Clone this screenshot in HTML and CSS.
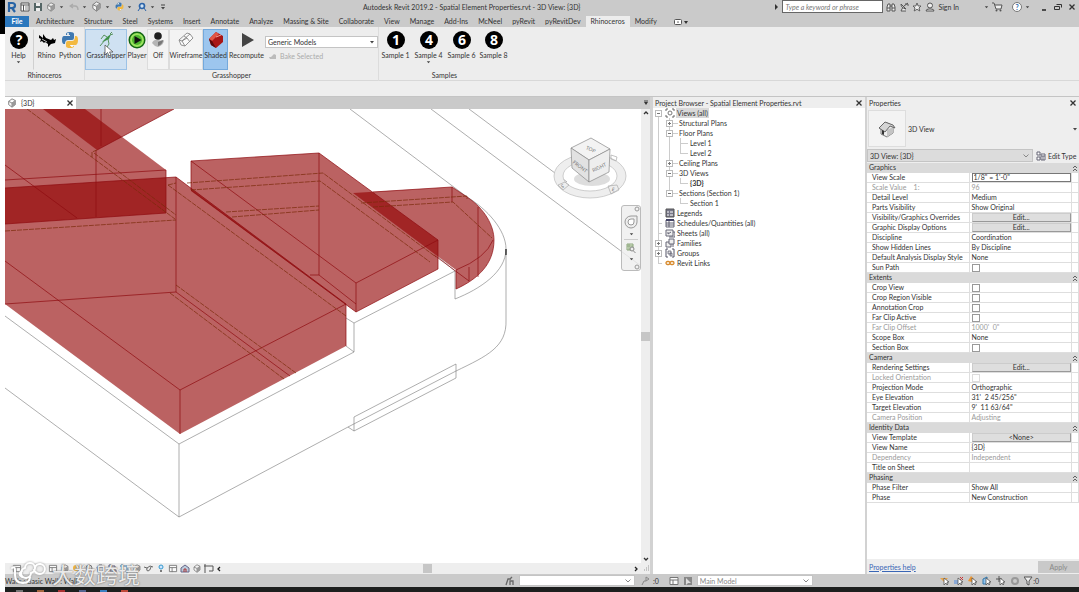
FILE: index.html
```html
<!DOCTYPE html>
<html lang="en">
<head>
  <meta charset="UTF-8" />
  <meta name="viewport" content="width=device-width, initial-scale=1.0"/>
  <title>Autodesk Revit 2019.2 - Spatial Element Properties.rvt - 3D View: {3D}</title>
  <link rel="stylesheet" href="styles.css">
</head>
<body>
  <svg class="defs" aria-hidden="true">
    <symbol id="drop" viewBox="0 0 6 4"><path d="M1 1h4L3 3.500z" fill="#444"/></symbol>
    <symbol id="chev" viewBox="0 0 8 6"><path d="M1.500 1.500L4 4l2.500-2.500" fill="none" stroke="#888"/></symbol>
    <symbol id="close" viewBox="0 0 8 8"><path d="M1.500 1.500l5 5M6.500 1.500l-5 5" stroke="#333" stroke-width="1.300"/></symbol>
    <symbol id="cube" viewBox="0 0 12 12"><path d="M2 4l4-3 4 2v5l-4 3-4-3zM2 4l4 2 4-3M6 6v5" fill="#f4f4f4" stroke="#777"/><path d="M6 6l4-3v5l-4 3z" fill="#999"/></symbol>
    <symbol id="python" viewBox="0 0 18 18"><path d="M5 8V3q0-2 4-2t4 2v4q0 2-2 2H7q-3 0-3 4H3q-2 0-2-4t2-4h6V4H5z" fill="#3f78b0"/><path d="M13 10v5q0 2-4 2t-4-2v-3q0-2 2-2h4q3 0 3-5h1q2 0 2 4t-2 5H9v1h4z" fill="#f3b940"/><circle cx="7" cy="3" r="1" fill="#fff"/><circle cx="11" cy="15" r="1" fill="#fff"/></symbol>
    <symbol id="collapse" viewBox="0 0 6 8"><path d="M1 4l2-2 2 2M1 7l2-2 2 2" fill="none" stroke="#555" stroke-width=".9"/></symbol>
    <symbol id="sheet" viewBox="0 0 10 10"><path d="M1 1.500h8v7H1zM1 4h8M4 4v5" fill="#fafafa" stroke="#777"/></symbol>
    <symbol id="pointer" viewBox="0 0 10 10"><path d="M4 2v7l2-2 1 2 1-1-1-2h2z" fill="#fff" stroke="#555" stroke-width=".8"/></symbol>
  </svg>

  <div class="app">
    <header class="titlebar">
      <div class="quick">
        <button class="ico" aria-label="Revit"><svg width="10" height="12" viewBox="0 0 10 12"><path d="M2 11V2h3q3 0 3 2.500T5 7H3M5 7l3 4" fill="none" stroke="#2763a5" stroke-width="2.200"/></svg></button>
        <button class="ico" aria-label="Open"><svg width="10" height="10" viewBox="0 0 10 10"><path d="M1 1h8v8H1zM1 3h8M3.500 3v6" fill="#fff" stroke="#555"/><path d="M5 5h3M5 7h3" stroke="#888"/></svg></button>
        <button class="ico" aria-label="Save"><svg width="10" height="10" viewBox="0 0 10 10"><path d="M1 1h8v8H1z" fill="#566"/><path d="M3 1h4v3H3zM3 6h4v3H3z" fill="#eee"/></svg></button>
        <button class="ico" aria-label="Synchronize"><svg width="10" height="10"><use href="#cube"/></svg></button>
        <button class="mini" aria-label="Synchronize options"><svg width="5" height="4"><use href="#drop"/></svg></button>
        <button class="ico" aria-label="Undo"><svg width="10" height="8" viewBox="0 0 10 8"><path d="M4 1L1 3l3 2M1 3h5q3 0 3 4" fill="none" stroke="#aaa" stroke-width="1.300"/></svg></button>
        <button class="mini" aria-label="Undo list"><svg width="5" height="4"><use href="#drop"/></svg></button>
        <button class="ico" aria-label="3D view"><svg width="11" height="11"><use href="#cube"/></svg></button>
        <button class="mini" aria-label="3D view options"><svg width="5" height="4"><use href="#drop"/></svg></button>
        <button class="ico" aria-label="Python shell"><svg width="9" height="9"><use href="#python"/></svg></button>
        <button class="mini" aria-label="Python options"><svg width="5" height="4"><use href="#drop"/></svg></button>
        <button class="ico" aria-label="Load add-in"><svg width="10" height="10" viewBox="0 0 10 10"><circle cx="5" cy="4" r="2.500" fill="#cfe2f3" stroke="#2a62a8" stroke-width="1.700"/><path d="M3 6L1 9M7 6l2 3" stroke="#2a62a8"/></svg></button>
        <button class="mini" aria-label="Add-in options"><svg width="5" height="4"><use href="#drop"/></svg></button>
        <button class="mini" aria-label="Customize toolbar"><svg width="6" height="6" viewBox="0 0 6 6"><path d="M1 1h4" stroke="#444"/><path d="M1 3h4L3 5.500z" fill="#444"/></svg></button>
      </div>
      <h1>Autodesk Revit 2019.2 - Spatial Element Properties.rvt - 3D View: {3D}</h1>
      <div class="account">
        <svg width="4" height="6" viewBox="0 0 4 6"><path d="M0 0l3 3-3 3z" fill="#333"/></svg>
        <input class="search" type="text" aria-label="Search" placeholder="Type a keyword or phrase">
        <button class="ico" aria-label="Find"><svg width="10" height="10" viewBox="0 0 10 10"><path d="M1 9V5l1-3h2v7zM9 9V5L8 2H6v7zM4 4h2M1 6h3M6 6h3" fill="#eee" stroke="#555"/></svg></button>
        <button class="ico" aria-label="Communication"><svg width="10" height="10" viewBox="0 0 10 10"><path d="M2 2q0 4 5 5zM4 5L2 9h5M5 4l4-3M6 2h3v2" fill="#eee" stroke="#555"/></svg></button>
        <button class="ico" aria-label="Favorites"><svg width="10" height="10" viewBox="0 0 10 10"><path d="M5 1l1.200 3H9L7 6l.8 3L5 7.300 2.200 9 3 6 1 4h2.800z" fill="#eee" stroke="#555" stroke-width=".9"/></svg></button>
        <button class="sign"><svg width="10" height="10" viewBox="0 0 10 10"><circle cx="5" cy="3.500" r="2.500" fill="#eee" stroke="#555"/><path d="M1 9q0-2 3-2h2q3 0 3 2z" fill="#eee" stroke="#555"/></svg>Sign In</button>
        <button class="mini" aria-label="Account menu"><svg width="5" height="4"><use href="#drop"/></svg></button>
        <button class="ico" aria-label="App store"><svg width="11" height="10" viewBox="0 0 11 10"><path d="M0 1h2l2 6h5l1-4H3" fill="#eee" stroke="#555"/><circle cx="4.500" cy="8.500" r="1" fill="#555"/><circle cx="8.500" cy="8.500" r="1" fill="#555"/></svg></button>
        <button class="help" aria-label="Help">?</button>
        <button class="mini" aria-label="Help menu"><svg width="5" height="4"><use href="#drop"/></svg></button>
        <div class="window">
          <button aria-label="Minimize"><svg width="8" height="8" viewBox="0 0 8 8"><path d="M2 7h4" stroke="#222" stroke-width="1.500"/></svg></button>
          <button aria-label="Restore"><svg width="8" height="8" viewBox="0 0 8 8"><path d="M2.500 1.500h5v3M.5 3.500h5v3h-5z" fill="none" stroke="#333"/></svg></button>
          <button aria-label="Close"><svg width="8" height="8"><use href="#close"/></svg></button>
        </div>
      </div>
    </header>

    <nav class="tabs">
      <a class="file" href="#file">File</a>
      <a href="#architecture">Architecture</a>
      <a href="#structure">Structure</a>
      <a href="#steel">Steel</a>
      <a href="#systems">Systems</a>
      <a href="#insert">Insert</a>
      <a href="#annotate">Annotate</a>
      <a href="#analyze">Analyze</a>
      <a href="#massing">Massing &amp; Site</a>
      <a href="#collaborate">Collaborate</a>
      <a href="#view">View</a>
      <a href="#manage">Manage</a>
      <a href="#addins">Add-Ins</a>
      <a href="#mcneel">McNeel</a>
      <a href="#pyrevit">pyRevit</a>
      <a href="#pyrevitdev">pyRevitDev</a>
      <a class="current" href="#rhinoceros">Rhinoceros</a>
      <a href="#modify">Modify</a>
      <button class="panelmode" aria-label="Minimize ribbon"><svg width="14" height="6" viewBox="0 0 14 6"><rect x=".5" y=".5" width="7" height="5" rx="1" fill="#fff" stroke="#555"/><path d="M3 3.500h2L4 2zM10 2h4l-2 3z" fill="#333"/></svg></button>
    </nav>

    <section class="ribbon">
      <div class="panel rhino-panel">
        <div class="tools">
          <button class="tool w-help"><svg viewBox="0 0 18 18"><circle cx="9" cy="9" r="9"/><text x="9" y="14" class="glyph">?</text></svg>Help<svg class="more"><use href="#drop"/></svg></button>
          <button class="tool w-rhino"><svg viewBox="0 0 18 18"><path d="M1 4l4 3V3l3 4 5 2 2-2 1 2 2-1-1 4-4 1-3 3v-3l-3-2-1 1-2-2-2 1 1-3-2-1z"/><path d="M4 8l5 3" stroke="#eee" stroke-width=".8"/></svg>Rhino</button>
          <button class="tool w-python"><svg viewBox="0 0 18 18"><use href="#python"/></svg>Python</button>
        </div>
        <h2>Rhinoceros</h2>
      </div>
      <div class="panel gh-panel">
        <div class="tools">
          <button class="tool w-gh hover"><svg viewBox="0 0 18 18"><path d="M14 3l-4 3-5 5 3-1 4-2z" fill="#3d9146"/><path d="M13 3l2-2M13 4l3-1M10 6L7 4 4 8M8 9L3 15M11 8l1 5-2 3" stroke="#4b8a4d" stroke-width=".9" fill="none"/></svg>Grasshopper</button>
          <button class="tool w-player"><svg viewBox="0 0 18 18"><circle cx="9" cy="9" r="8.500" fill="#161"/><circle cx="9" cy="9" r="7" fill="#9be45f"/><circle cx="9" cy="9" r="5" fill="#4eb62f"/><path d="M6.500 5l7 4-7 4z" fill="#111"/></svg>Player</button>
          <button class="tool w-off box"><svg viewBox="0 0 18 18"><circle cx="9" cy="5" r="3.800" fill="#222"/><path d="M3 12q2-4 6-3t6 0q0 5-6 7-4-1-6-4z" fill="#b5b5b5"/><path d="M9 11l5-2q0 4-5 6z" fill="#777"/></svg>Off</button>
          <button class="tool w-wire box"><svg viewBox="0 0 18 18"><path d="M2 9l8-7 3 1 3 4-8 8-4-1zM2 9l3 1 8-7M5 10l3 5M7 5l3 2 3 4M5 10l5-3" fill="#fafafa" stroke="#888" stroke-width=".9"/></svg>Wireframe</button>
          <button class="tool w-shade on"><svg viewBox="0 0 18 18"><path d="M2 8l7-7 7 4v6l-7 6-5-3z" fill="#a91616"/><path d="M2 8l7-7 3 2-7 7z" fill="#e15545"/><path d="M2 8l3 2 4 7-5-3z" fill="#5e0909"/><path d="M9 6l5-2" stroke="#f3a39a"/></svg>Shaded</button>
          <button class="tool w-recomp"><svg viewBox="0 0 18 18"><path d="M4 2l12 7-12 7z" fill="#444"/></svg>Recompute</button>
          <div class="bake">
            <span class="combo category"><select aria-label="Bake category"><option>Generic Models</option></select><svg width="6" height="4"><use href="#drop"/></svg></span>
            <button class="bakebtn" disabled><svg width="8" height="8" viewBox="0 0 8 8"><path d="M0 5h2l3-3 2 1v4H1z" fill="#bbb"/></svg>Bake Selected</button>
          </div>
        </div>
        <h2>Grasshopper</h2>
      </div>
      <div class="panel samples">
        <div class="tools">
          <button class="tool w-sample"><svg viewBox="0 0 18 18"><circle cx="9" cy="9" r="9"/><text x="9" y="14" class="glyph">1</text></svg>Sample 1</button>
          <button class="tool w-sample"><svg viewBox="0 0 18 18"><circle cx="9" cy="9" r="9"/><text x="9" y="14" class="glyph">4</text></svg>Sample 4<svg class="more"><use href="#drop"/></svg></button>
          <button class="tool w-sample"><svg viewBox="0 0 18 18"><circle cx="9" cy="9" r="9"/><text x="9" y="14" class="glyph">6</text></svg>Sample 6</button>
          <button class="tool w-last"><svg viewBox="0 0 18 18"><circle cx="9" cy="9" r="9"/><text x="9" y="14" class="glyph">8</text></svg>Sample 8</button>
        </div>
        <h2>Samples</h2>
      </div>
      <svg class="cursor" width="10" height="13" viewBox="0 0 10 13"><path d="M1 1v10l2.500-2.500L5 12l2-1-1.500-3H9z" fill="#fff" stroke="#555" stroke-width=".8"/></svg>
    </section>

    <main class="workspace">
      <section class="viewer">
        <div class="doctabs">
          <div class="doctab"><svg width="10" height="10"><use href="#cube"/></svg><span>{3D}</span><button aria-label="Close view"><svg width="8" height="8"><use href="#close"/></svg></button></div>
          <button class="tablist" aria-label="View list"><svg width="6" height="6" viewBox="0 0 6 6"><path d="M1 1h4" stroke="#444"/><path d="M1 2h4L3 5z" fill="#333"/></svg></button>
        </div>
        <div class="stage">
          <div class="canvas">
            <svg class="model" viewBox="5 109 636 454" preserveAspectRatio="xMinYMin slice" role="img" aria-label="3D model">
              <!-- building shell -->
              <g class="shell">
                <path d="M350 109L467 197M431 109L641 266M469 109L567 182"/>
                <path d="M5 316L179 444L354 352V323L455 271V299C480 289 506 272 506 249C506 230 487 209 467 197"/>
                <path d="M346 346l8 6M346 318l8 5M438 257l17 14"/>
                <path d="M179 444V517M5 388L179 517L348 427L456 371C487 356 507 347 506 320V249"/>
                <path d="M354 417L456 364V378L354 431zM348 427l6 4"/>
              </g>
              <!-- spaces -->
              <g class="solid">
                <path d="M5 109H85L166 170V213L5 224z"/>
                <path d="M43 109H174L97 150z"/>
                <path d="M5 188L176 177L346 304V346L180 434L5 304z"/>
                <path d="M191 161L319 153L438 240V269L356 312L191 191z"/>
                <path d="M353 193L452 187L467 197C485 209 494 226 494 240C494 264 478 279 456 289V270z"/>
              </g>
              <g class="edge">
                <path d="M5 180L166 170V213L5 224M5 165L77 218M96 150V217M101 109V146M97 150L174 109"/>
                <path d="M5 188L176 177V292L5 304M5 261L180 390V434M180 390L346 304V346M176 292L290 376"/>
                <path d="M176 177L346 304M191 190V161L319 153V275H310M319 153L438 240V269L356 312V283L191 161M356 283L438 240M319 275L356 304M191 190L356 312"/>
                <path d="M373 192L452 187V202M478 207V277M469 267V281M456 270V289M434 255L469 281M452 187L467 197C485 209 494 226 494 240C494 264 478 279 456 289M456 270Q486 258 493 240"/>
              </g>
              <g class="hidden-edge">
                <path d="M27 109L175 219M92 157V152L97 150M94 153L176 215M5 231L176 220"/>
                <path d="M168 185L346 316M170 293L284 379M176 285L296 373M168 185L176 183"/>
                <path d="M187 183L323 173L436 257M191 190L320 181L430 262M226 212L319 206M232 217L319 210"/>
                <path d="M361 203L467 196V199M373 207L453 202L492 238"/>
              </g>
              <path d="M506 249v6" stroke="#000"/>
            </svg>
            <svg class="viewcube" width="74" height="66" viewBox="553 135 74 66" role="img" aria-label="View cube">
              <path class="ring" fill-rule="evenodd" d="M554 176a36 22 0 1 0 72 0a36 22 0 1 0-72 0zM563 176a27 15 0 1 0 54 0a27 15 0 1 0-54 0z"/>
              <ellipse cx="592" cy="179" rx="18" ry="7" fill="#bbb" opacity=".5"/>
              <path d="M591 138l19 11-21 11-18-12z" fill="#f3f3f3" stroke="#888" stroke-width=".7"/>
              <path d="M571 148l18 12v22l-17-14z" fill="#e2e2e2" stroke="#888" stroke-width=".7"/>
              <path d="M589 160l21-11-1 23-20 10z" fill="#eee" stroke="#888" stroke-width=".7"/>
              <g class="facetext">
                <text transform="translate(590 151) rotate(25)">TOP</text>
                <text transform="translate(579 168) rotate(36)">FRONT</text>
                <text transform="translate(600 169) rotate(-26)">RIGHT</text>
                <text transform="translate(563 188) rotate(-20)">S</text>
                <text transform="translate(613 191) rotate(15)">E</text>
              </g>
              <path d="M558 185l7-3 4 3-6 5zM608 186l9-1 2 5-8 4zM611 155l6 2-1 4-5-2z" fill="none" stroke="#aaa" stroke-width=".7"/>
            </svg>
            <div class="navbar">
              <button aria-label="Close navigation bar"><svg width="6" height="6" viewBox="0 0 6 6"><circle cx="3" cy="3" r="2" fill="none" stroke="#999"/></svg></button>
              <button aria-label="Steering wheel"><svg width="14" height="14" viewBox="0 0 14 14"><path d="M13 1v6a6 6 0 1 1-6-6z" fill="#eee" stroke="#999"/><path d="M10 4v3a3 3 0 1 1-3-3z" fill="#fff" stroke="#999"/></svg></button>
              <button aria-label="Wheel options"><svg width="5" height="4"><use href="#drop"/></svg></button>
              <button class="zoombtn" aria-label="Zoom region"><svg width="10" height="11" viewBox="0 0 10 11"><path d="M1 1h6v6H1zM1 3h6M3 1v6" fill="#dce9d0" stroke="#8ca67d"/><circle cx="6" cy="6" r="2" fill="#eee" stroke="#888"/><path d="M7.500 8L9.500 10" stroke="#888"/></svg></button>
              <button aria-label="Zoom options"><svg width="5" height="4"><use href="#drop"/></svg></button>
              <button aria-label="Customize"><svg width="6" height="6" viewBox="0 0 6 6"><circle cx="3" cy="3" r="2" fill="none" stroke="#999"/></svg></button>
            </div>
          </div>
          <div class="vscroll">
            <svg width="8" height="8" viewBox="0 0 8 8"><path d="M2 5l2-2 2 2" fill="none" stroke="#333" stroke-width="1.300"/></svg>
            <span class="thumb"></span>
            <svg width="8" height="8" viewBox="0 0 8 8"><path d="M2 3l2 2 2-2" fill="none" stroke="#333" stroke-width="1.300"/></svg>
          </div>
        </div>
        <div class="viewbar">
          <div class="viewtools">
            <button class="scalebtn" aria-label="Scale"><svg width="10" height="9"><use href="#sheet"/></svg></button>
            <button aria-label="Detail level"><svg width="10" height="9"><use href="#sheet"/></svg></button>
            <button aria-label="Visual style"><svg width="10" height="9"><use href="#cube"/></svg></button>
            <button aria-label="Sun path"><svg width="10" height="9" viewBox="0 0 10 9"><circle cx="4" cy="4" r="3" fill="#f1b53d"/><path d="M5 5l4 3" stroke="#c22"/></svg></button>
            <button aria-label="Shadows"><svg width="10" height="9" viewBox="0 0 10 9"><circle cx="5" cy="4" r="3" fill="#ddd" stroke="#777"/><path d="M6 6l3 2" stroke="#c22" stroke-width="1.500"/></svg></button>
            <button aria-label="Rendering dialog"><svg width="10" height="9" viewBox="0 0 10 9"><path d="M1 3h7l-1 5H2zM3 3V1h3" fill="#ddd" stroke="#667"/></svg></button>
            <button aria-label="Crop view"><svg width="10" height="9" viewBox="0 0 10 9"><path d="M2 0v7h7M0 2h7v7" fill="none" stroke="#557"/></svg></button>
            <button aria-label="Show crop"><svg width="10" height="9" viewBox="0 0 10 9"><path d="M2 0v7h7M0 2h7v7" fill="none" stroke="#37a"/></svg></button>
            <button aria-label="Lock view"><svg width="10" height="9"><use href="#cube"/></svg></button>
            <button aria-label="Hide or isolate"><svg width="10" height="9" viewBox="0 0 10 9"><path d="M0 3l3 1 3-2 3 1M3 4q-1 3 1 3t3-4" fill="none" stroke="#666"/></svg></button>
            <button aria-label="Reveal hidden elements"><svg width="10" height="9" viewBox="0 0 10 9"><circle cx="5" cy="3" r="2" fill="#cde4ff" stroke="#39c"/><path d="M4 7h2" stroke="#555" stroke-width="1.500"/></svg></button>
            <button aria-label="View properties"><svg width="10" height="9"><use href="#sheet"/></svg></button>
            <button aria-label="Analytical model"><svg width="10" height="9" viewBox="0 0 10 9"><path d="M1 4l4-3 4 3v4H1z" fill="#bcd" stroke="#668"/><path d="M4 8V5h2v3" stroke="#a33" fill="none"/></svg></button>
            <button aria-label="Displacement sets"><svg width="10" height="9"><use href="#cube"/></svg></button>
            <button aria-label="Constraints"><svg width="10" height="9" viewBox="0 0 10 9"><path d="M1 0v9M0 2h9v5M5 7h4" fill="none" stroke="#555"/></svg></button>
            <button aria-label="Scroll left"><svg width="6" height="8" viewBox="0 0 6 8"><path d="M4 2L2 4l2 2" fill="none" stroke="#222" stroke-width="1.300"/></svg></button>
          </div>
          <div class="hscroll"><span class="thumb"></span></div>
          <svg width="8" height="8" viewBox="0 0 8 8"><path d="M3 2l2 2-2 2" fill="none" stroke="#222" stroke-width="1.300"/></svg>
          <svg class="grip" width="7" height="7" viewBox="0 0 7 7"><path d="M5 1h1M3 3h1M5 3h1M1 5h1M3 5h1M5 5h1" stroke="#999"/></svg>
        </div>
      </section>

      <aside class="browser">
        <header class="dockhead"><h2>Project Browser - Spatial Element Properties.rvt</h2><button aria-label="Close project browser"><svg width="8" height="8"><use href="#close"/></svg></button></header>
        <ul class="tree">
          <li>
            <div class="row"><i class="toggle minus"></i><svg class="kind" viewBox="0 0 10 10"><path d="M1 3V1h2M7 1h2v2M9 7v2H7M3 9H1V7" fill="none" stroke="#666"/><circle cx="5" cy="5" r="2" fill="none" stroke="#777"/></svg><span class="picked">Views (all)</span></div>
            <ul class="sub">
              <li><div class="row"><i class="toggle plus"></i><i class="dash"></i>Structural Plans</div></li>
              <li><div class="row"><i class="toggle minus"></i><i class="dash"></i>Floor Plans</div>
                <ul class="leafs"><li class="row">Level 1</li><li class="row">Level 2</li></ul></li>
              <li><div class="row"><i class="toggle plus"></i><i class="dash"></i>Ceiling Plans</div></li>
              <li><div class="row"><i class="toggle minus"></i><i class="dash"></i>3D Views</div>
                <ul class="leafs"><li class="row open">{3D}</li></ul></li>
              <li><div class="row"><i class="toggle minus"></i><i class="dash"></i>Sections (Section 1)</div>
                <ul class="leafs"><li class="row">Section 1</li></ul></li>
            </ul>
          </li>
          <li><div class="row"><i class="stub"></i><svg class="kind" viewBox="0 0 10 10"><path d="M1 1h8v8H1z" fill="#778" stroke="#555"/><path d="M2 4h2M2 7h2M5 4h3M5 7h3" stroke="#fff"/></svg><span>Legends</span></div></li>
          <li><div class="row"><i class="stub"></i><svg class="kind" viewBox="0 0 10 10"><path d="M1 2h8v7H1zM1 5h8M1 7h8M4 3v6" fill="#fff" stroke="#556" stroke-width=".9"/><path d="M1 2h8" stroke="#446" stroke-width="2"/></svg><span>Schedules/Quantities (all)</span></div></li>
          <li><div class="row"><i class="stub"></i><svg class="kind" viewBox="0 0 10 10"><path d="M1 2h7v6H1zM8 4h2v5H4" fill="#eee" stroke="#667"/><path d="M3 6l3-2M3 4v2" stroke="#667"/></svg><span>Sheets (all)</span></div></li>
          <li><div class="row"><i class="toggle plus"></i><svg class="kind" viewBox="0 0 10 10"><path d="M1 9V4h3V1h5v5H6v3z" fill="#eee" stroke="#667"/><path d="M4 4v2h2M8 6v3" stroke="#667" fill="none"/></svg><span>Families</span></div></li>
          <li><div class="row"><i class="toggle plus"></i><svg class="kind" viewBox="0 0 10 10"><path d="M3 1H1v8h2M7 1h2v8H7" fill="none" stroke="#556"/><path d="M3 3h3v3H3zM5 5h2v3H5z" fill="#ddd" stroke="#667" stroke-width=".8"/></svg><span>Groups</span></div></li>
          <li><div class="row"><i class="stub"></i><svg class="kind" viewBox="0 0 10 10"><rect x="1" y="3.500" width="4" height="3" rx="1.500" fill="none" stroke="#d78a2d" stroke-width="1.300"/><rect x="5" y="3.500" width="4" height="3" rx="1.500" fill="none" stroke="#d78a2d" stroke-width="1.300"/></svg><span>Revit Links</span></div></li>
        </ul>
      </aside>

      <aside class="props">
        <header class="dockhead"><h2>Properties</h2><button aria-label="Close properties"><svg width="8" height="8"><use href="#close"/></svg></button></header>
        <div class="type">
          <div class="preview"><svg width="18" height="18" viewBox="0 0 18 18"><path d="M3 8v6l6 3 6-4V6L9 3z" fill="#eee" stroke="#777"/><path d="M9 10v7l6-4V7z" fill="#c4c4c4"/><path d="M1 8l6-6 8 3 2 3-5-2-5 6z" fill="#d5d5d5" stroke="#666"/><path d="M4 10l2 1v4l-2-1z" fill="#333"/></svg></div>
          <span>3D View</span>
          <button aria-label="Type list"><svg width="6" height="4"><use href="#drop"/></svg></button>
        </div>
        <div class="instance">
          <span class="combo"><select aria-label="Instance"><option>3D View: {3D}</option></select><svg width="8" height="6"><use href="#chev"/></svg></span>
          <button><svg width="10" height="10" viewBox="0 0 10 10"><path d="M1 1h3v3H1zM1 6h3v3H1zM5 3h4v6H5zM5 5h4M7 5v4" fill="#fff" stroke="#667"/></svg>Edit Type</button>
        </div>
        <div class="gridwrap">
          <table>
            <tbody>
              <tr class="group"><th colspan="2">Graphics</th><td><svg><use href="#collapse"/></svg></td></tr>
              <tr><th><label for="scale">View Scale</label></th><td><input id="scale" type="text" value="1/8&quot; = 1'-0&quot;"></td><td></td></tr>
              <tr class="off"><th>Scale Value &nbsp;&nbsp; 1:</th><td>96</td><td></td></tr>
              <tr><th>Detail Level</th><td>Medium</td><td></td></tr>
              <tr><th>Parts Visibility</th><td>Show Original</td><td></td></tr>
              <tr><th>Visibility/Graphics Overrides</th><td><button>Edit...</button></td><td></td></tr>
              <tr><th>Graphic Display Options</th><td><button>Edit...</button></td><td></td></tr>
              <tr><th>Discipline</th><td>Coordination</td><td></td></tr>
              <tr><th>Show Hidden Lines</th><td>By Discipline</td><td></td></tr>
              <tr><th>Default Analysis Display Style</th><td>None</td><td></td></tr>
              <tr><th><label for="sun">Sun Path</label></th><td><input id="sun" type="checkbox"></td><td></td></tr>
            </tbody>
            <tbody>
              <tr class="group"><th colspan="2">Extents</th><td><svg><use href="#collapse"/></svg></td></tr>
              <tr><th><label for="crop">Crop View</label></th><td><input id="crop" type="checkbox"></td><td></td></tr>
              <tr><th><label for="region">Crop Region Visible</label></th><td><input id="region" type="checkbox"></td><td></td></tr>
              <tr><th><label for="anno">Annotation Crop</label></th><td><input id="anno" type="checkbox"></td><td></td></tr>
              <tr><th><label for="far">Far Clip Active</label></th><td><input id="far" type="checkbox"></td><td></td></tr>
              <tr class="off"><th>Far Clip Offset</th><td>1000'&nbsp; 0"</td><td></td></tr>
              <tr><th>Scope Box</th><td>None</td><td></td></tr>
              <tr><th><label for="section">Section Box</label></th><td><input id="section" type="checkbox"></td><td></td></tr>
            </tbody>
            <tbody>
              <tr class="group"><th colspan="2">Camera</th><td><svg><use href="#collapse"/></svg></td></tr>
              <tr><th>Rendering Settings</th><td><button>Edit...</button></td><td></td></tr>
              <tr class="off"><th><label for="locked">Locked Orientation</label></th><td><input id="locked" type="checkbox" disabled></td><td></td></tr>
              <tr><th>Projection Mode</th><td>Orthographic</td><td></td></tr>
              <tr><th>Eye Elevation</th><td>31'&nbsp; 2 45/256"</td><td></td></tr>
              <tr><th>Target Elevation</th><td>9'&nbsp; 11 63/64"</td><td></td></tr>
              <tr class="off"><th>Camera Position</th><td>Adjusting</td><td></td></tr>
            </tbody>
            <tbody>
              <tr class="group"><th colspan="2">Identity Data</th><td><svg><use href="#collapse"/></svg></td></tr>
              <tr><th>View Template</th><td><button>&lt;None&gt;</button></td><td></td></tr>
              <tr><th>View Name</th><td>{3D}</td><td></td></tr>
              <tr class="off"><th>Dependency</th><td>Independent</td><td></td></tr>
              <tr><th>Title on Sheet</th><td></td><td></td></tr>
            </tbody>
            <tbody>
              <tr class="group"><th colspan="2">Phasing</th><td><svg><use href="#collapse"/></svg></td></tr>
              <tr><th>Phase Filter</th><td>Show All</td><td></td></tr>
              <tr><th>Phase</th><td>New Construction</td><td></td></tr>
            </tbody>
          </table>
        </div>
        <footer class="apply"><a href="#help">Properties help</a><button disabled>Apply</button></footer>
      </aside>
    </main>

    <footer class="status">
      <span class="message">Walls : Basic Wall : Wall</span>
      <svg width="10" height="10" viewBox="0 0 10 10"><path d="M1 9l2-6h3M5 9V5h3v4M7 1L5 3" fill="none" stroke="#666" stroke-width="1.300"/></svg>
      <span class="combo workset"><select aria-label="Active workset"><option></option></select><svg width="8" height="6"><use href="#chev"/></svg></span>
      <span class="requests"><svg width="9" height="10" viewBox="0 0 9 10"><path d="M1 9l2-4h2V1l3 2-3 2" fill="none" stroke="#888"/></svg>:0</span>
      <svg width="10" height="10"><use href="#sheet"/></svg>
      <svg width="10" height="10" viewBox="0 0 10 10"><path d="M1 1h8v8H1z" fill="#888"/><path d="M3 2l5 5H5L3 9z" fill="#ddd"/></svg>
      <span class="combo option"><select aria-label="Design option"><option>Main Model</option></select><svg width="8" height="6"><use href="#chev"/></svg></span>
      <div class="selectors">
        <button aria-label="Select links"><svg width="10" height="10" viewBox="0 0 10 10"><path d="M0 2h8L4 6z" fill="#e8a44a"/><use href="#pointer"/></svg></button>
        <button aria-label="Select underlay"><svg width="10" height="10" viewBox="0 0 10 10"><path d="M0 4h7v4H0z" fill="#8aa9d6"/><path d="M6 1l3 3M9 1L6 4" stroke="#c33"/><use href="#pointer"/></svg></button>
        <button aria-label="Select pinned"><svg width="10" height="10" viewBox="0 0 10 10"><path d="M3 0l3 3-2 3-4-1z" fill="#e99430"/><use href="#pointer"/></svg></button>
        <button aria-label="Select by face"><svg width="10" height="10" viewBox="0 0 10 10"><path d="M1 3l4-2v7H1z" fill="#8fc4ef" stroke="#37a"/><use href="#pointer"/></svg></button>
        <button aria-label="Drag on selection"><svg width="10" height="10" viewBox="0 0 10 10"><path d="M3 0v6M0 3h6" stroke="#555"/><use href="#pointer"/></svg></button>
        <button aria-label="Background processes"><svg width="10" height="10" viewBox="0 0 10 10"><circle cx="5" cy="5" r="3" fill="none" stroke="#999" stroke-width="2"/></svg></button>
        <button aria-label="Filter"><svg width="9" height="10" viewBox="0 0 9 10"><path d="M0 1h8L5 5v4L3 8V5z" fill="#eee" stroke="#555"/></svg>:0</button>
      </div>
    </footer>
    <div class="taskbar"><i class="c1"></i><i class="c2"></i><i class="c3"></i><i class="c4"></i><i class="c5"></i><i class="c6"></i></div>

    <div class="watermark">
      <svg width="42" height="30" viewBox="0 0 42 30"><path d="M4 10q3-2 3 2v5q0 8 8 8 7 0 7-6M14 13q-5 3 0 6M17 10a5 5 0 1 1 6 5a5 5 0 1 1-6-5M27 10a5 5 0 1 1 5 6q-4 0-6-4" /></svg>
      <span lang="zh">大数跨境</span>
    </div>
  </div>
</body>
</html>
```
FILE: styles.css
```css
* {
  box-sizing: border-box;
}
body {
  margin: 0;
  background: linear-gradient(#000 34px, #fff 34px);
  font-family: Lato, "Open Sans", "Noto Sans CJK SC", sans-serif;
  font-size: 7px;
  line-height: 10px;
  color: #333;
}
h1, h2 {
  margin: 0;
  font-size: 7px;
  font-weight: normal;
}
a {
  color: inherit;
  text-decoration: none;
}
button, input, select {
  margin: 0;
  padding: 0;
  border: 0;
  background: none;
  color: inherit;
  font: inherit;
}
svg {
  display: block;
  flex: none;
}
.defs {
  position: absolute;
  width: 0;
  height: 0;
}
.app {
  position: relative;
  display: flex;
  flex-direction: column;
  height: 100vh;
  margin-left: 5px;
  background: #cacaca;
}

/* title bar */
.titlebar {
  display: flex;
  align-items: center;
  height: 13px;
}
.titlebar h1 {
  flex: 1;
  text-align: center;
  white-space: nowrap;
}
.quick, .account, .window {
  display: flex;
  align-items: center;
}
.quick {
  width: 163px;
  padding-left: 2px;
  justify-content: space-between;
}
.quick .mini {
  margin-right: 2px;
}
.account {
  gap: 3px;
}
.search {
  width: 101px;
  height: 13px;
  padding: 0 2px;
  border: 1px solid #666;
  background: #fff;
  font-style: italic;
}
.search::placeholder {
  color: #777;
}
.sign {
  display: flex;
  align-items: center;
  gap: 3px;
  margin-right: 22px;
}
.help {
  width: 10px;
  height: 10px;
  margin-left: 6px;
  border: 1px solid #777;
  border-radius: 50%;
  background: #fff;
  color: #2a62a8;
  font-weight: bold;
  line-height: 8px;
}
.window {
  gap: 6px;
  margin-left: 7px;
  padding-right: 3px;
}

/* ribbon tabs */
.tabs {
  display: flex;
  height: 14px;
  padding-top: 3px;
  line-height: 11px;
  white-space: nowrap;
}
.tabs a {
  padding: 0 5px;
}
.tabs .file {
  width: 24px;
  margin-right: 2px;
  background: #2a77bd;
  color: #fff;
  font-weight: bold;
  text-align: center;
}
.tabs .current {
  background: #ededed;
}
.panelmode {
  margin-left: 12px;
}

/* ribbon panels */
.ribbon {
  position: relative;
  display: flex;
  height: 69px;
  padding-bottom: 15px;
  background: linear-gradient(#ededed 53px, #d8d8d8 53px, #d8d8d8 54px, #eee 54px);
}
.panel {
  border-right: 1px solid #dcdcdc;
}
.panel h2 {
  text-align: center;
}
.rhino-panel {
  width: 80px;
}
.gh-panel {
  width: 294px;
}
.samples {
  width: 131px;
  border-right: 0;
}
.tools {
  display: flex;
  height: 43px;
  padding: 2px 0 0;
}
.tool {
  display: flex;
  flex-direction: column;
  align-items: center;
  height: 41px;
  padding-top: 1px;
  border: 1px solid transparent;
  white-space: nowrap;
}
.tool > svg {
  width: 18px;
  height: 18px;
  margin-bottom: 1px;
  overflow: visible;
}
.tool > .more {
  width: 5px;
  height: 4px;
}
.glyph {
  fill: #fff;
  font-family: "Open Sans", sans-serif;
  font-size: 14px;
  font-weight: bold;
  text-anchor: middle;
}
.w-help {
  width: 29px;
  border-right-color: #d0d0d0;
  padding-right: 2px;
}
.w-rhino {
  width: 25px;
}
.w-python {
  width: 22px;
}
.w-gh {
  width: 42px;
}
.w-player {
  width: 20px;
}
.w-off {
  width: 22px;
}
.w-wire {
  width: 34px;
}
.w-shade {
  width: 25px;
}
.w-recomp {
  width: 37px;
}
.w-sample {
  width: 33px;
}
.w-last {
  width: 31px;
}
.tool.hover {
  border-color: #9cc2e6;
  background: #cfe1f2;
}
.tool.box {
  border-color: #dcdcdc;
  background: #f3f3f3;
}
.tool.on {
  border-color: #74a9dc;
  background: #9dc6ee;
}
.combo {
  display: flex;
  align-items: center;
  padding-right: 2px;
  border: 1px solid #c4c4c4;
  background: #fff;
}
.combo select {
  flex: 1;
  min-width: 0;
  padding: 0 2px;
  appearance: none;
}
.bake {
  padding-top: 7px;
}
.category {
  width: 113px;
  height: 12px;
}
.bakebtn {
  display: flex;
  align-items: center;
  gap: 3px;
  margin-top: 3px;
  padding-left: 4px;
  color: #aaa;
}
.cursor {
  position: absolute;
  left: 99px;
  top: 17px;
}

/* workspace */
.workspace {
  flex: 1;
  display: flex;
  min-height: 0;
  border-top: 1px solid #c4c4c4;
}
.viewer {
  flex: 1;
  display: flex;
  flex-direction: column;
  min-width: 0;
  border-right: 3px solid #d2d2d2;
}
.doctabs {
  display: flex;
  justify-content: space-between;
  height: 12px;
  padding-right: 1px;
}
.doctab {
  display: flex;
  align-items: center;
  width: 71px;
  padding: 0 2px;
  gap: 4px;
  background: #fff;
}
.doctab button {
  margin-left: auto;
}
.stage {
  flex: 1;
  display: flex;
  min-height: 0;
}
.canvas {
  position: relative;
  flex: 1;
  min-width: 0;
  overflow: hidden;
  background: #fff;
}
.model {
  width: 100%;
  height: 100%;
}
.shell {
  fill: none;
  stroke: #777;
  stroke-width: .6;
}
.solid {
  fill: #900000;
  fill-opacity: .615;
}
.edge {
  fill: none;
  stroke: #8e0b10;
  stroke-width: .7;
}
.hidden-edge {
  fill: none;
  stroke: #7a2a08;
  stroke-width: .7;
  stroke-dasharray: 5 1;
}
.viewcube {
  position: absolute;
  right: 14px;
  top: 26px;
}
.ring {
  fill: #eee;
  stroke: #bbb;
  stroke-width: .7;
}
.facetext {
  fill: #777;
  font-size: 5px;
  text-anchor: middle;
}
.navbar {
  position: absolute;
  right: 0;
  top: 96px;
  display: flex;
  flex-direction: column;
  align-items: center;
  justify-content: space-between;
  width: 20px;
  height: 66px;
  border: 1px solid #bbb;
  border-radius: 3px;
  background: rgba(238, 238, 238, .8);
}
.navbar button:first-child, .navbar button:last-child {
  align-self: flex-end;
}
.zoombtn {
  padding: 3px 2px 0;
  border-top: 1px solid #ccc;
}
.vscroll {
  display: flex;
  flex-direction: column;
  align-items: center;
  justify-content: space-between;
  width: 9px;
  background: #eee;
}
.thumb {
  width: 9px;
  height: 9px;
  background: #c6c6c6;
}
.viewbar {
  display: flex;
  align-items: center;
  height: 11px;
  background: #eee;
}
.viewtools {
  display: flex;
  gap: 2px;
  padding-left: 3px;
}
.scalebtn {
  width: 38px;
  padding-left: 4px;
}
.hscroll {
  flex: 1;
  display: flex;
  justify-content: center;
}
.grip {
  margin-left: 3px;
}

/* docked panels */
.dockhead {
  display: flex;
  align-items: center;
  justify-content: space-between;
  height: 11px;
  padding: 0 2px;
  background: #eee;
}
.browser {
  width: 214px;
  border-right: 2px solid #d2d2d2;
  background: #fff;
}
.tree, .tree ul {
  margin: 0;
  padding: 0;
  list-style: none;
}
.tree {
  padding-left: 2px;
  background: linear-gradient(#ccc, #ccc) no-repeat 5px 5px / 1px calc(100% - 10px);
}
.row {
  display: flex;
  align-items: center;
  height: 10px;
  white-space: nowrap;
}
.toggle {
  width: 7px;
  height: 7px;
  border: 1px solid #bbb;
}
.minus {
  background: linear-gradient(#777, #777) no-repeat 1px 2px / 3px 1px, #fff;
}
.plus {
  background: linear-gradient(#777, #777) no-repeat 1px 2px / 3px 1px, linear-gradient(#777, #777) no-repeat 2px 1px / 1px 3px, #fff;
}
.kind {
  width: 10px;
  height: 10px;
  margin: 0 1px 0 3px;
}
.stub {
  width: 4px;
  height: 1px;
  margin-left: 3px;
  background: #ccc;
}
.dash {
  width: 5px;
  height: 1px;
  margin-right: 1px;
  background: #ccc;
}
.row span {
  padding: 0 1px;
}
.picked {
  background: #d9d9d9;
}
.sub {
  background: linear-gradient(#ccc, #ccc) no-repeat 14px 0 / 1px calc(100% - 15px);
}
.tree .sub {
  padding-left: 11px;
}
.tree .leafs {
  padding-left: 14px;
  background: linear-gradient(#ccc, #ccc) no-repeat 14px 0 / 1px calc(100% - 5px);
}
.leafs .row::before {
  content: "";
  width: 8px;
  height: 1px;
  margin-right: 2px;
  background: #ccc;
}
.open {
  font-weight: bold;
}

/* properties palette */
.props {
  display: flex;
  flex-direction: column;
  width: 212px;
  background: #eee;
}
.type {
  display: flex;
  align-items: center;
  gap: 2px;
  height: 41px;
  padding: 1px;
}
.type button {
  margin-left: auto;
}
.preview {
  display: flex;
  align-items: center;
  justify-content: center;
  width: 38px;
  height: 37px;
  border: 1px solid #ddd;
  background: #f3f3f3;
}
.instance {
  display: flex;
  height: 14px;
  padding-bottom: 1px;
}
.instance .combo {
  width: 166px;
  background: #dcdcdc;
}
.instance button {
  flex: 1;
  display: flex;
  align-items: center;
  gap: 2px;
  padding-left: 3px;
  white-space: nowrap;
}
.gridwrap {
  flex: 1;
  background: #fff;
}
table {
  width: 100%;
  border-collapse: separate;
  border-spacing: 0;
  table-layout: fixed;
}
tr {
  height: 10px;
}
th, td {
  height: 10px;
  padding: 0 0 0 2px;
  border-bottom: 1px solid #dedede;
  border-right: 1px solid #dedede;
  font-weight: normal;
  line-height: 9px;
  text-align: left;
  white-space: nowrap;
}
th {
  width: 103px;
  padding-left: 5px;
}
td:last-child {
  width: 7px;
  padding: 0;
}
.group th, .group td {
  border-color: #dadada;
  background: #dadada;
}
.group th {
  width: auto;
  padding-left: 2px;
}
.group svg {
  width: 6px;
  height: 8px;
}
.off {
  color: #999;
}
td button {
  display: block;
  width: 100%;
  height: 9px;
  border: 1px solid #ccc;
  border-bottom-color: #999;
  border-right-color: #999;
  background: #dedede;
  line-height: 7px;
}
td input[type="text"] {
  display: block;
  width: 100%;
  height: 9px;
  padding: 0 1px;
  border: 1px solid #777;
}
td input[type="checkbox"] {
  display: block;
  width: 8px;
  height: 8px;
  border: 1px solid #999;
  background: #fff;
  appearance: none;
}
td input[type="checkbox"]:disabled {
  border-color: #ddd;
}
.apply {
  display: flex;
  align-items: center;
  justify-content: space-between;
  height: 15px;
  padding-left: 2px;
}
.apply a {
  color: #3a66b5;
  text-decoration: underline;
}
.apply button {
  width: 41px;
  height: 12px;
  background: #c9c9c9;
  color: #888;
}

/* status bar */
.status {
  display: flex;
  align-items: center;
  height: 13px;
}
.message {
  width: 500px;
}
.status .combo {
  height: 11px;
}
.workset {
  width: 116px;
  margin: 0 6px 0 4px;
}
.requests {
  display: flex;
  align-items: center;
  gap: 3px;
  margin-right: 10px;
}
.status > svg + svg {
  margin: 0 4px;
}
.option {
  width: 116px;
  color: #888;
}
.selectors {
  display: flex;
  gap: 4px;
  margin-left: auto;
  padding-right: 40px;
}
.selectors button {
  display: flex;
  align-items: center;
}
.taskbar {
  display: flex;
  gap: 14px;
  height: 5px;
  padding: 3px 0 0 11px;
  background: #1d1f1e;
}
.taskbar i {
  width: 7px;
  height: 2px;
}
.c1 {
  background: #777;
}
.c2 {
  background: #a5673f;
}
.c3 {
  background: #a33;
}
.c4 {
  background: #55658f;
}
.c5 {
  background: #3a7fc0;
}
.c6 {
  background: #c04a3a;
}

/* stamp over the lower left corner */
.watermark {
  position: absolute;
  left: 3px;
  bottom: 4px;
  display: flex;
  align-items: center;
  gap: 2px;
  color: rgba(255, 255, 255, .85);
  font-family: "Noto Sans CJK SC", sans-serif;
  font-size: 22px;
  line-height: 28px;
  text-shadow: 0 0 2px #777, 0 0 1px #777;
  pointer-events: none;
}
.watermark path {
  fill: none;
  stroke: #fff;
  stroke-width: 2;
  stroke-linecap: round;
}
.watermark svg {
  filter: drop-shadow(0 0 1px #999);
}
```
